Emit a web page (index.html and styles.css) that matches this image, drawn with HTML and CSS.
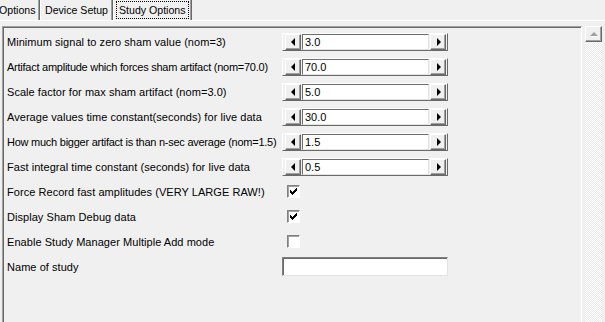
FILE: index.html
```html
<!DOCTYPE html>
<html lang="en">
<head>
    <meta charset="UTF-8" />
    <title>Study Options</title>
    <link rel="stylesheet" href="styles.css">
</head>
<body>
    <div class="tabs">
        <div class="tab tab-first">Options</div>
        <div class="tab">Device Setup</div>
        <div class="tab tab-active"><span class="focus">Study Options</span></div>
    </div>
    <div class="tab-page">
        <div class="panel">
            <div class="form">
                <div class="label">Minimum signal to zero sham value (nom=3)</div>
                <div class="spinner">
                    <div class="btn"><span class="arrow-left"></span></div>
                    <div class="edit">3.0</div>
                    <div class="btn"><span class="arrow-right"></span></div>
                </div>

                <div class="label label-tight">Artifact amplitude which forces sham artifact (nom=70.0)</div>
                <div class="spinner">
                    <div class="btn"><span class="arrow-left"></span></div>
                    <div class="edit">70.0</div>
                    <div class="btn"><span class="arrow-right"></span></div>
                </div>

                <div class="label">Scale factor for max sham artifact (nom=3.0)</div>
                <div class="spinner">
                    <div class="btn"><span class="arrow-left"></span></div>
                    <div class="edit">5.0</div>
                    <div class="btn"><span class="arrow-right"></span></div>
                </div>

                <div class="label">Average values time constant(seconds) for live data</div>
                <div class="spinner">
                    <div class="btn"><span class="arrow-left"></span></div>
                    <div class="edit">30.0</div>
                    <div class="btn"><span class="arrow-right"></span></div>
                </div>

                <div class="label label-tight">How much bigger artifact is than n-sec average (nom=1.5)</div>
                <div class="spinner">
                    <div class="btn"><span class="arrow-left"></span></div>
                    <div class="edit">1.5</div>
                    <div class="btn"><span class="arrow-right"></span></div>
                </div>

                <div class="label">Fast integral time constant (seconds) for live data</div>
                <div class="spinner">
                    <div class="btn"><span class="arrow-left"></span></div>
                    <div class="edit">0.5</div>
                    <div class="btn"><span class="arrow-right"></span></div>
                </div>

                <div class="label">Force Record fast amplitudes (VERY LARGE RAW!)</div>
                <div class="checkbox">
                    <svg width="7" height="7" viewBox="0 0 7 7" shape-rendering="crispEdges"><path d="M0 2h1v3H0zM1 3h1v3H1zM2 4h1v3H2zM3 3h1v3H3zM4 2h1v3H4zM5 1h1v3H5zM6 0h1v3H6z" fill="#000"/></svg>
                </div>

                <div class="label">Display Sham Debug data</div>
                <div class="checkbox">
                    <svg width="7" height="7" viewBox="0 0 7 7" shape-rendering="crispEdges"><path d="M0 2h1v3H0zM1 3h1v3H1zM2 4h1v3H2zM3 3h1v3H3zM4 2h1v3H4zM5 1h1v3H5zM6 0h1v3H6z" fill="#000"/></svg>
                </div>

                <div class="label">Enable Study Manager Multiple Add mode</div>
                <div class="checkbox"></div>

                <div class="label">Name of study</div>
                <div class="text-field"></div>
            </div>
        </div>
        <div class="scrollbar">
            <div class="scroll-btn"><span class="arrow-up"></span></div>
            <div class="scroll-track"></div>
        </div>
    </div>
</body>
</html>
```

FILE: styles.css
```css
body {
    margin: 0;
    width: 605px;
    height: 322px;
    overflow: hidden;
    background: #f0f0f0;
    font-family: 'Liberation Sans', Arial, sans-serif;
    font-size: 11px;
    color: #000;
}

/* tab strip */
.tabs {
    display: flex;
    height: 20px;
    font-size: 10.6px;
}

.tab {
    box-sizing: border-box;
    height: 20px;
    line-height: 20px;
    padding: 0 4px 0 4px;
    border-left: 1px solid #fff;
    border-right: 1px solid #696969;
    box-shadow: inset -1px 0 #a0a0a0;
    white-space: nowrap;
}

.tab-first {
    width: 41px;
    margin-left: -1px;
    padding: 0;
    border-left: none;
}

.tab-active {
    padding: 1px 2px 1px 2px;
    line-height: 16px;
}

.focus {
    display: block;
    padding: 0 2px;
    border: 1px dotted #000;
}

/* page under the tabs */
.tab-page {
    display: flex;
    gap: 3px;
    border-top: 1px solid #fff;
    padding: 5px 0 0 2px;
    height: 400px;
}

.panel {
    width: 578px;
    border-top: 1px solid #a0a0a0;
    border-left: 1px solid #a0a0a0;
    border-right: 1px solid #fff;
    box-shadow: inset 1px 1px #696969;
}

.form {
    display: grid;
    grid-template-columns: 275px 170px;
    grid-auto-rows: 25px;
    align-items: center;
    padding: 2px 0 0 4px;
}

.label {
    white-space: nowrap;
    letter-spacing: 0.05px;
}

.label-tight {
    letter-spacing: -0.25px;
}

/* spin edit */
.spinner {
    display: flex;
    align-items: center;
    gap: 1px;
    box-sizing: border-box;
    width: 166px;
    height: 18px;
    padding: 0 1px 0 2px;
    border-top: 1px solid #fff;
    border-left: 1px solid #fff;
    border-right: 1px solid #696969;
    border-bottom: 1px solid #696969;
}

.btn {
    box-sizing: border-box;
    width: 16px;
    height: 16px;
    display: flex;
    align-items: center;
    justify-content: center;
    border-top: 1px solid #fff;
    border-left: 1px solid #fff;
    border-right: 1px solid #696969;
    border-bottom: 1px solid #696969;
    box-shadow: inset -1px -1px #a0a0a0;
}

.arrow-left {
    width: 0;
    height: 0;
    border-top: 4px solid transparent;
    border-bottom: 4px solid transparent;
    border-right: 4px solid #000;
    margin-right: 1px;
}

.arrow-right {
    width: 0;
    height: 0;
    border-top: 4px solid transparent;
    border-bottom: 4px solid transparent;
    border-left: 4px solid #000;
    margin-left: 1px;
}

.edit {
    box-sizing: border-box;
    flex: 1;
    height: 16px;
    line-height: 14px;
    padding-left: 2px;
    background: #fff;
    border-top: 1px solid #6d6d6d;
    border-left: 1px solid #6d6d6d;
    border-right: 1px solid #e3e3e3;
    border-bottom: 1px solid #e3e3e3;
}

/* check box */
.checkbox {
    box-sizing: border-box;
    width: 13px;
    height: 13px;
    margin-left: 5px;
    display: flex;
    align-items: center;
    justify-content: center;
    background: #fff;
    border-top: 1px solid #808080;
    border-left: 1px solid #808080;
    border-right: 1px solid #fff;
    border-bottom: 1px solid #fff;
    box-shadow: inset 1px 1px #a0a0a0;
}

.text-field {
    box-sizing: border-box;
    width: 166px;
    height: 19px;
    background: #fff;
    border-top: 1px solid #808080;
    border-left: 1px solid #808080;
    border-right: 1px solid #e3e3e3;
    border-bottom: 1px solid #e3e3e3;
    box-shadow: inset 1px 1px #696969;
}

/* scroll bar */
.scrollbar {
    width: 17px;
    display: flex;
    flex-direction: column;
}

.scroll-btn {
    box-sizing: border-box;
    height: 16px;
    display: flex;
    align-items: center;
    justify-content: center;
    background: #f0f0f0;
    border-top: 1px solid #fff;
    border-left: 1px solid #fff;
    border-right: 1px solid #696969;
    border-bottom: 1px solid #696969;
    box-shadow: inset -1px -1px #a0a0a0;
}

.arrow-up {
    width: 0;
    height: 0;
    border-left: 4px solid transparent;
    border-right: 4px solid transparent;
    border-bottom: 4px solid #a0a0a0;
    filter: drop-shadow(1px 1px 0 #fff);
}

.scroll-track {
    flex: 1;
    background: repeating-conic-gradient(#fff 0 25%, #eaeaea 0 50%) 0 0 / 2px 2px;
}
```
